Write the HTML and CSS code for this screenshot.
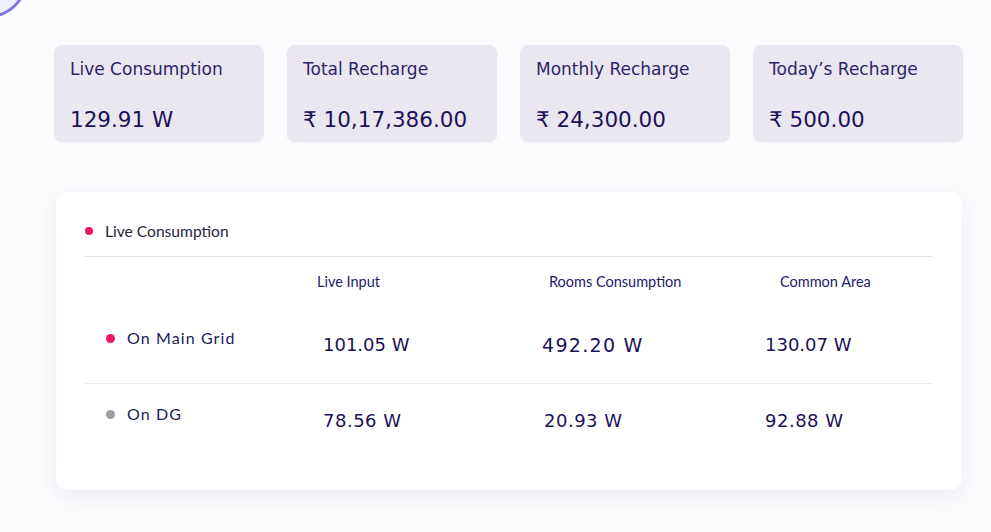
FILE: index.html
```html
<!DOCTYPE html>
<html>
<head>
<meta charset="utf-8">
<link rel="stylesheet" href="styles.css">
</head>
<body>
<div class="deco"></div>
<main class="page">
  <section class="cards">
    <div class="card"><div class="card-label">Live Consumption</div><div class="card-value">129.91 W</div></div>
    <div class="card"><div class="card-label">Total Recharge</div><div class="card-value">₹ 10,17,386.00</div></div>
    <div class="card"><div class="card-label">Monthly Recharge</div><div class="card-value">₹ 24,300.00</div></div>
    <div class="card"><div class="card-label">Today’s Recharge</div><div class="card-value">₹ 500.00</div></div>
  </section>
  <section class="panel">
    <div class="panel-head"><span class="dot red"></span><span>Live Consumption</span></div>
    <div class="grid head-row">
      <div></div>
      <div class="col-h">Live Input</div>
      <div class="col-h">Rooms Consumption</div>
      <div class="col-h">Common Area</div>
    </div>
    <div class="grid data-row first">
      <div class="row-label"><span class="dot red small"></span>On Main Grid</div>
      <div class="val v1">101.05 W</div>
      <div class="val v2 big">492.20 W</div>
      <div class="val v3">130.07 W</div>
    </div>
    <div class="grid data-row second">
      <div class="row-label"><span class="dot gray small"></span>On DG</div>
      <div class="val v1 w">78.56 W</div>
      <div class="val v2 w">20.93 W</div>
      <div class="val v3 w">92.88 W</div>
    </div>
  </section>
</main>
</body>
</html>
```
FILE: styles.css
```css
html, body {
  margin: 0;
  padding: 0;
}
body {
  background: #fcfcfe;
  width: 991px;
  height: 532px;
  overflow: hidden;
  position: relative;
  font-family: "Open Sans", "Liberation Sans", sans-serif;
}
.deco {
  position: absolute;
  left: -52px;
  top: -62px;
  width: 74px;
  height: 74px;
  border-radius: 50%;
  border: 3px solid #7d76f0;
  background: #f1f0fd;
}
.page {
  padding: 45px 28px 0 54px;
}
.cards {
  display: grid;
  grid-template-columns: repeat(4, 210px);
  gap: 23px;
}
.card {
  height: 97px;
  background: #ebe7f1;
  border-radius: 8px;
  box-sizing: border-box;
  padding: 13px 16px 0 16px;
  box-shadow: 0 1px 2px rgba(120, 110, 160, 0.08);
}
.card-label {
  font-family: "DejaVu Sans", sans-serif;
  font-size: 17px;
  color: #2c2468;
  line-height: 22px;
}
.card-value {
  font-family: "DejaVu Sans", sans-serif;
  font-size: 21.5px;
  color: #1d1259;
  line-height: 30px;
  margin-top: 25px;
}
.panel {
  margin-top: 50px;
  margin-left: 2px;
  width: 906px;
  height: 298px;
  box-sizing: border-box;
  background: #ffffff;
  border-radius: 12px;
  box-shadow: 0 6px 22px rgba(165, 165, 200, 0.2);
  padding: 28px 30px 0 29px;
}
.panel-head {
  display: flex;
  align-items: center;
  gap: 12px;
  font-family: "Lato", sans-serif;
  font-size: 15.6px;
  color: #262638;
  height: 22px;
  padding-bottom: 14px;
  border-bottom: 1px solid #e2e2e6;
}
.dot {
  display: inline-block;
  width: 8px;
  height: 8px;
  border-radius: 50%;
}
.dot.red { background: #e8195c; }
.dot.gray { background: #9d9d9f; }
.dot.small { width: 9px; height: 9px; margin-right: 12px; }
.grid {
  display: grid;
  grid-template-columns: 232px 232px 231px 1fr;
}
.head-row {
  padding-top: 16px;
  height: 32px;
}
.col-h {
  font-family: "Lato", sans-serif;
  font-size: 14.5px;
  color: #1e1b6c;
  line-height: 18px;
}
.data-row {
  align-items: start;
  box-sizing: border-box;
}
.data-row.first {
  border-bottom: 1px solid #ececef;
  height: 79px;
  padding-top: 22px;
}
.data-row.second {
  padding-top: 19px;
}
.row-label {
  display: flex;
  align-items: center;
  padding-left: 21px;
  font-family: "Lato", sans-serif;
  font-size: 16px;
  letter-spacing: 1.1px;
  color: #1a1a5c;
  line-height: 22px;
}
.val {
  font-family: "DejaVu Sans", sans-serif;
  font-size: 18px;
  color: #1d1259;
  line-height: 24px;
  margin-top: 6px;
}
.val.w { letter-spacing: 0.5px; }
.v1 { margin-left: 6px; }
.v2 { margin-left: -5px; }
.v2.big { margin-left: -7px; font-size: 19px; letter-spacing: 1.3px; }
.v3 { margin-left: -15px; }
```
